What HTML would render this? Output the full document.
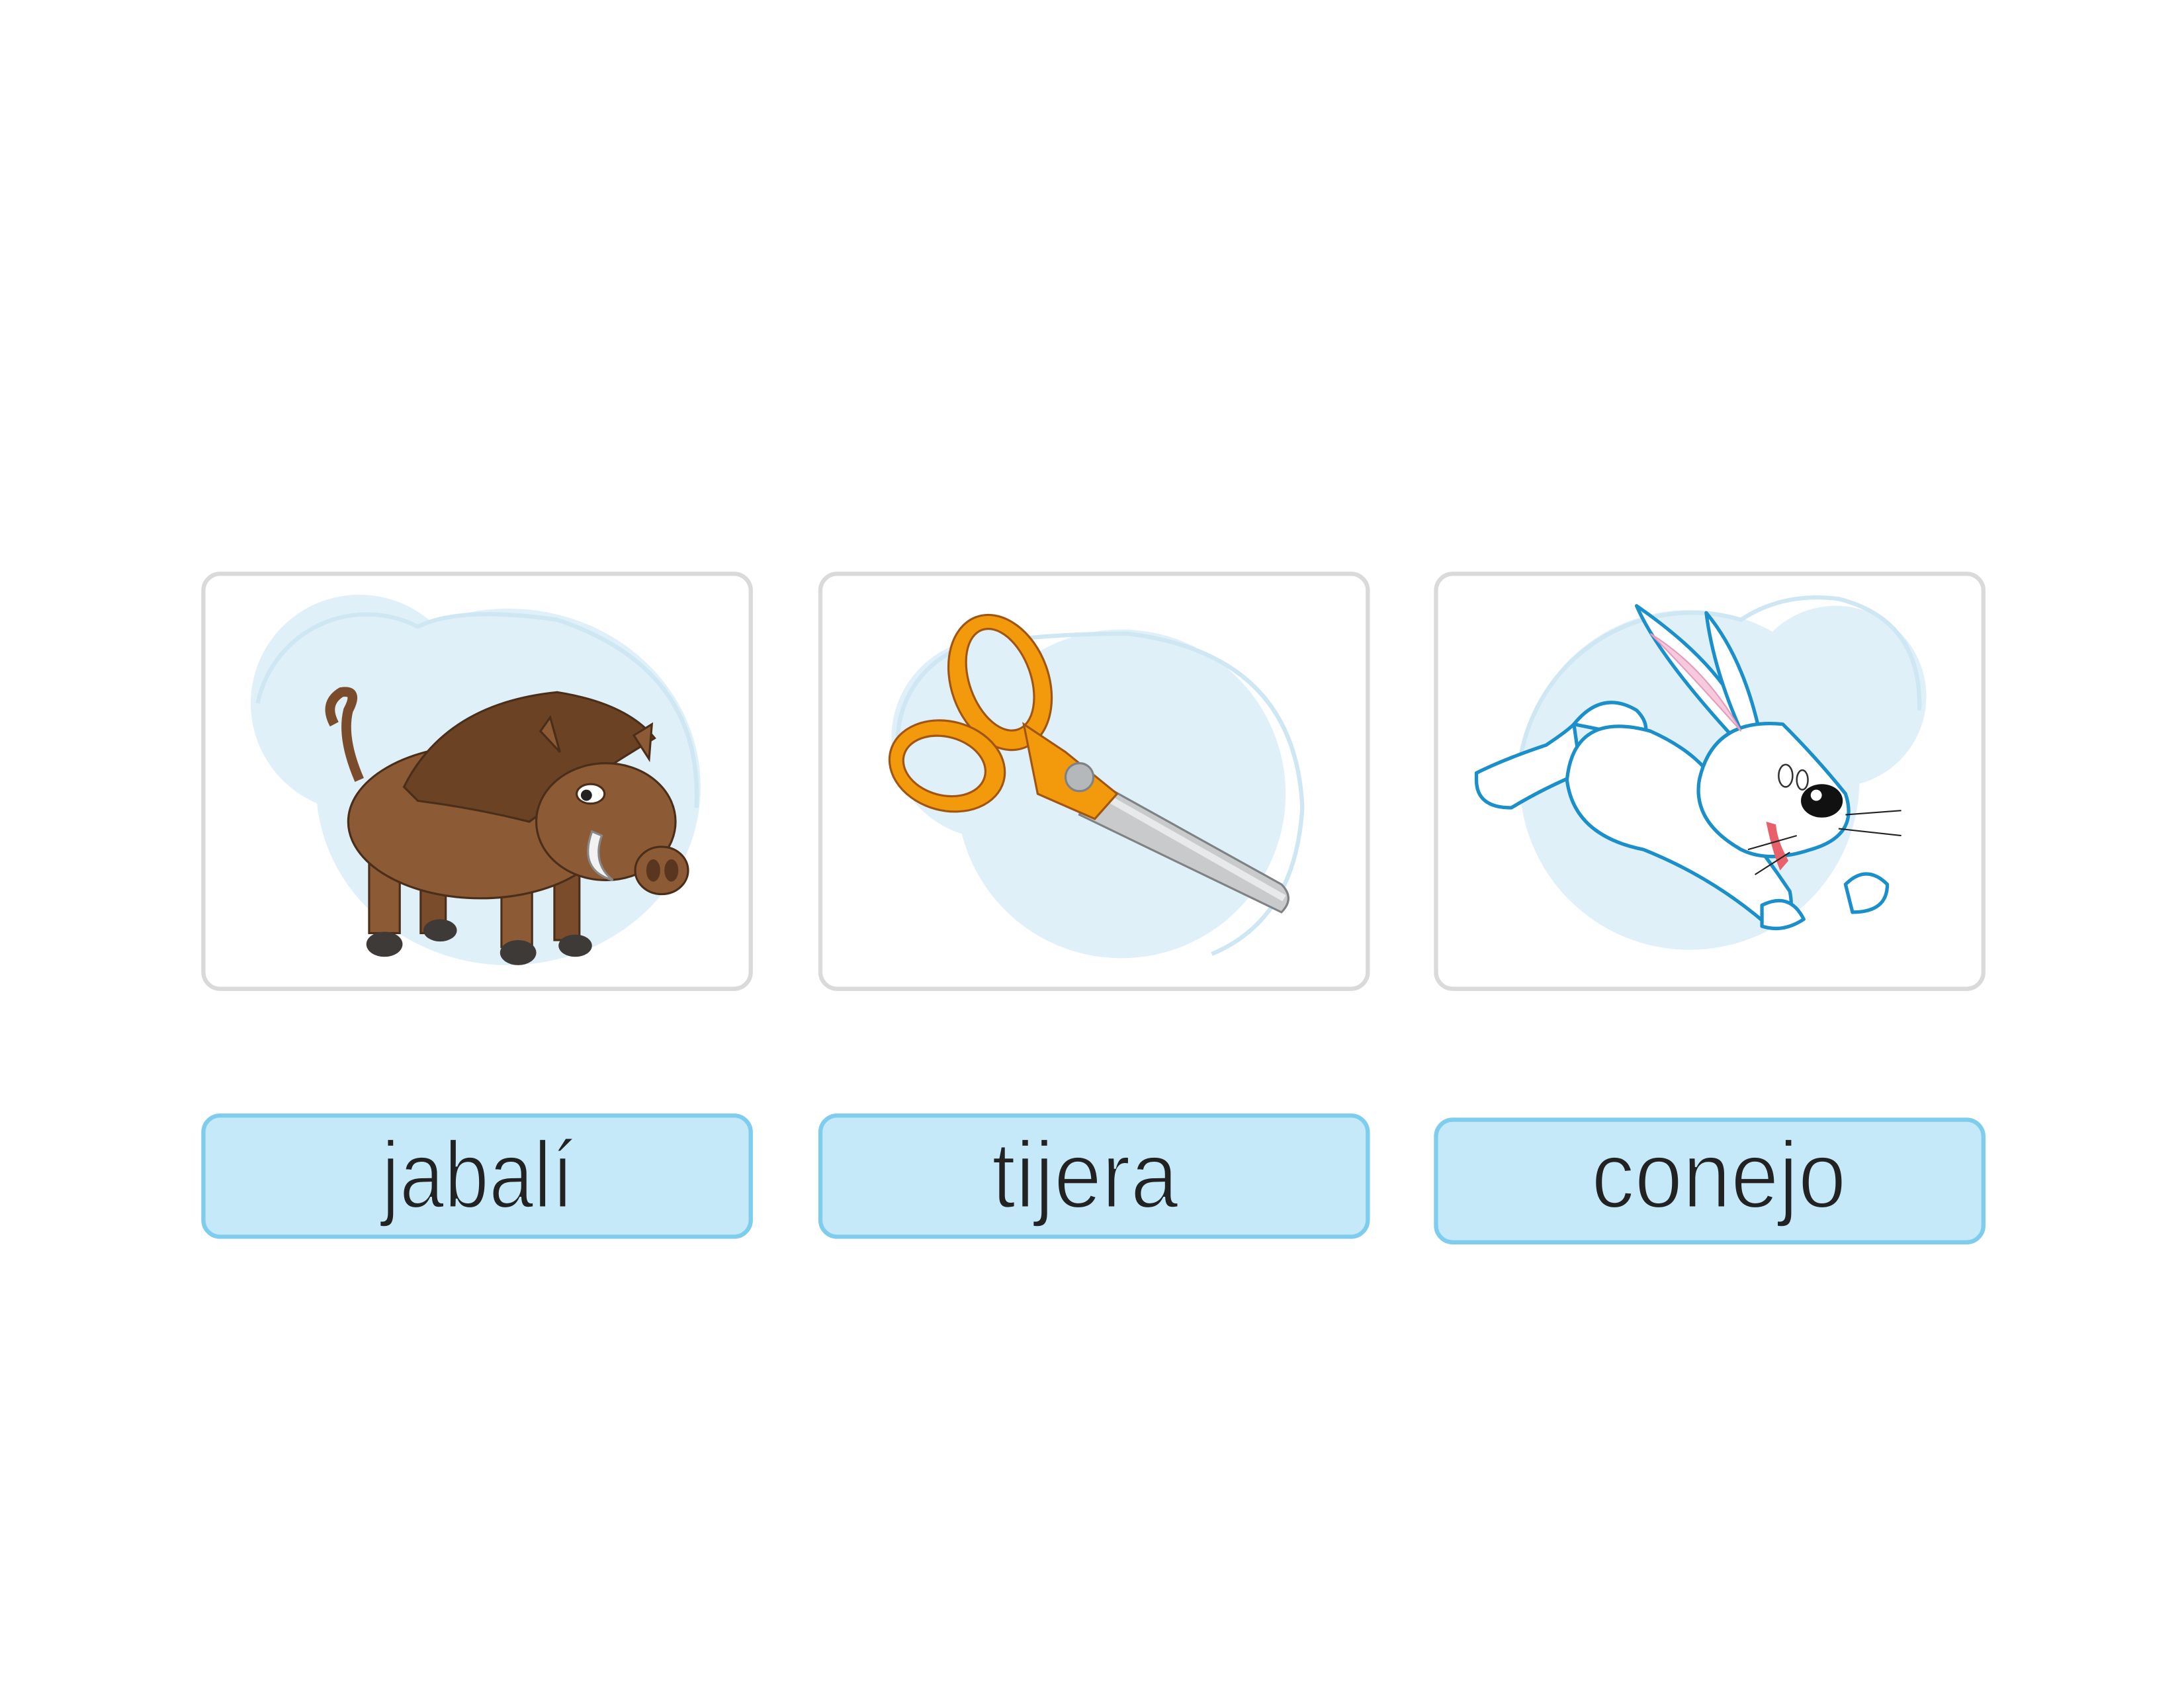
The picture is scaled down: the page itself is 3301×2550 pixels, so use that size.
<!DOCTYPE html>
<html><head><meta charset="utf-8"><style>html,body{margin:0;padding:0;background:#fff}svg{display:block}</style></head>
<body>
<svg width="3301" height="2550" viewBox="0 0 1568 1211.3" xmlns="http://www.w3.org/2000/svg">
<rect width="1568" height="1212" fill="#fff"/>
<!-- cards -->
<g fill="#fff" stroke="#dadada" stroke-width="3">
<rect x="146" y="412" width="393" height="298" rx="12"/>
<rect x="589" y="412" width="393" height="298" rx="12"/>
<rect x="1031" y="412" width="393" height="298" rx="12"/>
</g>
<!-- card1 blob -->
<g fill="#dff0f9">
<circle cx="258" cy="505" r="78"/>
<ellipse cx="365" cy="565" rx="138" ry="128"/>
</g>
<path d="M185 505 A80 80 0 0 1 300 450 Q330 435 400 445 Q505 480 500 580" fill="none" stroke="#cfe6f3" stroke-width="3"/>
<!-- boar -->
<g stroke="#4a2e1a" stroke-width="1.5">
<path d="M258 560 Q245 530 250 510 Q258 495 245 497 Q232 505 240 520" fill="none" stroke="#7a4c2c" stroke-width="7"/>
<rect x="265" y="615" width="22" height="55" fill="#8c5a34"/>
<rect x="302" y="625" width="18" height="45" fill="#7a4c2c"/>
<rect x="360" y="630" width="22" height="50" fill="#8c5a34"/>
<rect x="398" y="625" width="18" height="50" fill="#7a4c2c"/>
<ellipse cx="345" cy="590" rx="95" ry="55" fill="#8c5a34"/>
<path d="M290 565 Q320 505 400 497 Q450 505 470 530 Q420 560 380 590 Q340 580 300 575Z" fill="#6b4224"/>
<ellipse cx="435" cy="590" rx="50" ry="42" fill="#8c5a34"/>
<ellipse cx="475" cy="625" rx="19" ry="17" fill="#8c5a34"/>
<ellipse cx="469" cy="625" rx="5" ry="8" fill="#5a3620" stroke="none"/>
<ellipse cx="482" cy="625" rx="5" ry="8" fill="#5a3620" stroke="none"/>
<path d="M425 597 Q415 625 440 632 Q425 620 432 600Z" fill="#f2f2f2" stroke="#888"/>
<ellipse cx="424" cy="570" rx="10" ry="7" fill="#fff"/>
<circle cx="421" cy="571" r="4" fill="#222" stroke="none"/>
<path d="M388 525 L395 515 L402 540Z" fill="#8c5a34"/>
<path d="M455 528 L468 520 L466 545Z" fill="#8c5a34"/>
</g>
<g fill="#3d3a38">
<ellipse cx="276" cy="678" rx="13" ry="9"/><ellipse cx="316" cy="668" rx="12" ry="8"/>
<ellipse cx="372" cy="684" rx="13" ry="9"/><ellipse cx="413" cy="679" rx="12" ry="8"/>
</g>
<!-- card2 blob -->
<circle cx="712" cy="530" r="72" fill="#dff0f9"/>
<ellipse cx="805" cy="570" rx="118" ry="118" fill="#dff0f9"/>
<path d="M645 540 A72 72 0 0 1 720 460 Q760 455 810 455 Q930 470 935 580 Q930 660 870 685" fill="none" stroke="#cfe6f3" stroke-width="3"/>
<!-- scissors -->
<g>
<path d="M785 560 L920 635 Q930 645 920 655 L775 585Z" fill="#c8cacb" stroke="#7f8284" stroke-width="1.5"/>
<path d="M790 570 L922 645" stroke="#e8e9ea" stroke-width="5"/>
<ellipse cx="718" cy="490" rx="35" ry="50" transform="rotate(-20 718 490)" fill="#f29a0c" stroke="#a05510" stroke-width="1.5"/>
<ellipse cx="718" cy="488" rx="22" ry="38" transform="rotate(-20 718 488)" fill="#dff0f9" stroke="#a05510" stroke-width="1.5"/>
<ellipse cx="680" cy="550" rx="42" ry="32" transform="rotate(15 680 550)" fill="#f29a0c" stroke="#a05510" stroke-width="1.5"/>
<ellipse cx="678" cy="550" rx="30" ry="21" transform="rotate(15 678 550)" fill="#dff0f9" stroke="#a05510" stroke-width="1.5"/>
<path d="M735 520 L765 540 L802 570 L786 588 L745 570Z" fill="#f29a0c" stroke="#a05510" stroke-width="1.5"/>
<circle cx="775" cy="558" r="10" fill="#b5b8ba" stroke="#7f8284" stroke-width="1.5"/>
</g>
<!-- card3 blob -->
<circle cx="1318" cy="500" r="65" fill="#dff0f9"/>
<circle cx="1213" cy="560" r="122" fill="#dff0f9"/>
<path d="M1090 560 A125 125 0 0 1 1250 445 Q1280 425 1320 430 Q1380 445 1378 510" fill="none" stroke="#cfe6f3" stroke-width="3"/>
<!-- rabbit -->
<g fill="#fff" stroke="#1a8fc9" stroke-width="2.5" stroke-linejoin="round">
<path d="M1060 555 Q1080 545 1110 535 Q1125 525 1130 520 L1135 555 Q1110 565 1085 580 Q1060 580 1060 560Z"/>
<path d="M1130 520 Q1150 495 1175 510 Q1185 520 1180 530Z"/>
<path d="M1125 560 Q1130 510 1185 525 Q1230 545 1240 580 Q1265 610 1285 640 Q1290 665 1270 665 Q1230 630 1180 610 Q1130 600 1125 560Z"/>
<path d="M1175 435 Q1190 470 1245 530 L1255 525 Q1240 480 1175 435Z"/>
<path d="M1225 440 Q1250 470 1262 520 L1250 525 Q1230 480 1225 440Z"/>
<path d="M1220 560 Q1230 515 1280 520 Q1305 545 1325 570 Q1335 600 1300 610 Q1270 620 1250 610 Q1215 590 1220 560Z"/>
<path d="M1325 635 Q1340 620 1355 635 Q1355 655 1330 655Z"/>
<path d="M1265 650 Q1285 640 1295 660 Q1280 670 1265 665Z"/>
</g>
<path d="M1185 455 Q1210 480 1250 525 Q1225 480 1185 455Z" fill="#f6c9dd" stroke="#e59bbd" stroke-width="1"/>
<ellipse cx="1308" cy="575" rx="15" ry="12" fill="#111"/>
<circle cx="1304" cy="571" r="4" fill="#fff"/>
<ellipse cx="1282" cy="557" rx="5" ry="8" fill="#fff" stroke="#333" stroke-width="1.2"/>
<ellipse cx="1294" cy="560" rx="4" ry="7" fill="#fff" stroke="#333" stroke-width="1.2"/>
<path d="M1268 590 Q1272 610 1278 625 L1284 618Q1276 604 1275 592Z" fill="#e8606a"/>
<path d="M1325 585 L1365 582 M1320 595 L1365 600 M1290 600 L1255 610 M1285 612 L1260 628" stroke="#222" stroke-width="1" fill="none"/>
<!-- labels -->
<g fill="#c5e9f9" stroke="#7fcdee" stroke-width="3">
<rect x="146" y="801" width="393" height="87" rx="12"/>
<rect x="589" y="801" width="393" height="87" rx="12"/>
<rect x="1031" y="804" width="393" height="88" rx="12"/>
</g>
<g font-family="Liberation Sans, sans-serif" font-size="68" fill="#222" stroke="#c5e9f9" stroke-width="1.6" text-anchor="middle">
<text x="343" y="867" textLength="138" lengthAdjust="spacingAndGlyphs">jabalí</text>
<text x="779" y="867" textLength="134" lengthAdjust="spacingAndGlyphs">tijera</text>
<text x="1234" y="867" textLength="183" lengthAdjust="spacingAndGlyphs">conejo</text>
</g>
</svg>
</body></html>
